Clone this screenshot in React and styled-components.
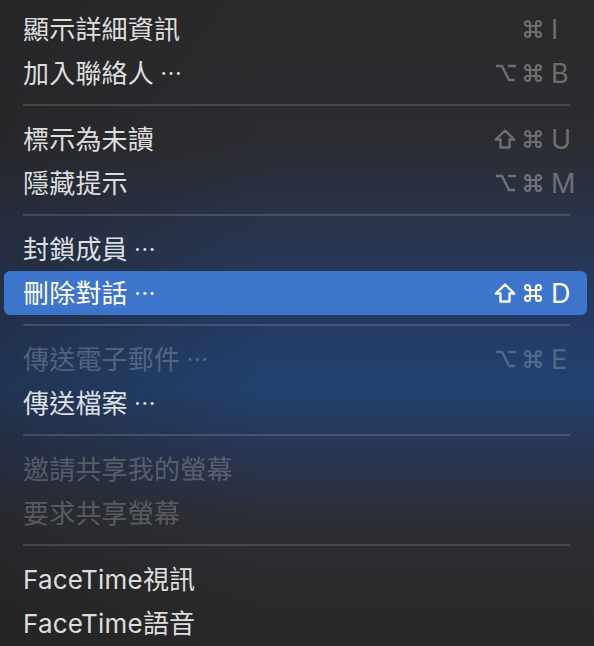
import styled, { createGlobalStyle } from 'styled-components';

const GlobalStyle = createGlobalStyle`
	html, body {
		margin: 0;
		padding: 0;
		background: #2a2a2a;
	}
	body {
		font-family: Inter, "Noto Sans CJK TC", "Noto Sans", sans-serif;
		-webkit-font-smoothing: antialiased;
	}
`;

const MENU = [
	[
		{ label: '顯示詳細資訊', mods: ['cmd'], keyName: 'I' },
		{ label: '加入聯絡人', more: true, mods: ['opt', 'cmd'], keyName: 'B' },
	],
	[
		{ label: '標示為未讀', mods: ['shift', 'cmd'], keyName: 'U' },
		{ label: '隱藏提示', mods: ['opt', 'cmd'], keyName: 'M' },
	],
	[
		{ label: '封鎖成員', more: true },
		{ label: '刪除對話', more: true, mods: ['shift', 'cmd'], keyName: 'D', active: true },
	],
	[
		{ label: '傳送電子郵件', more: true, mods: ['opt', 'cmd'], keyName: 'E', disabled: true },
		{ label: '傳送檔案', more: true },
	],
	[
		{ label: '邀請共享我的螢幕', disabled: true },
		{ label: '要求共享螢幕', disabled: true },
	],
	[{ label: 'FaceTime視訊' }, { label: 'FaceTime語音' }],
];

const Page = styled.div`
	width: 594px;
	height: 646px;
	overflow: hidden;
	background:
		linear-gradient(90deg, rgba(30, 30, 30, 0.35) 0%, rgba(30, 30, 30, 0) 45%),
		linear-gradient(
			180deg,
			#2a2a2b 0%,
			#2b2c30 22%,
			#29334a 34%,
			#243b64 50%,
			#22416f 60%,
			#283553 70%,
			#2c2f36 80%,
			#2a2a2a 92%,
			#282828 100%
		);
`;

const Menu = styled.div`
	display: flex;
	flex-direction: column;
	padding: 7px 7px 0 4px;
`;

const Row = styled.div`
	display: flex;
	align-items: center;
	height: 44px;
	padding: 0 14px 0 19px;
	border-radius: 6px;
	font-size: 26px;
	letter-spacing: 0.2px;
	background: ${({ $active }) => ($active ? '#3d74cc' : 'transparent')};
	color: ${({ $active, $disabled }) =>
		$active ? '#ffffff' : $disabled ? 'rgba(255, 255, 255, 0.24)' : 'rgba(255, 255, 255, 0.86)'};
`;

const Label = styled.span`
	flex: 1;
	display: flex;
	align-items: center;
	margin-top: -4px;
	white-space: nowrap;
`;

const Ellipsis = styled.span`
	margin-left: 6px;
	font-family: "Noto Sans CJK TC", sans-serif;
	font-size: 22px;
	letter-spacing: -2px;
`;

const Shortcut = styled.span`
	display: flex;
	align-items: center;
	color: ${({ $active, $disabled }) =>
		$active ? '#ffffff' : $disabled ? 'rgba(255, 255, 255, 0.22)' : 'rgba(255, 255, 255, 0.32)'};
`;

const Mods = styled.span`
	display: flex;
	align-items: center;
	gap: 7px;
`;

const Key = styled.span`
	width: 22px;
	margin-left: 8px;
	font-family: Inter, "Liberation Sans", sans-serif;
	font-size: 27px;
	line-height: 1;
`;

const Separator = styled.div`
	height: 2px;
	margin: 9px 17px 11px 19px;
	background: rgba(255, 255, 255, 0.14);
`;

const CmdIcon = () => (
	<svg width="20" height="20" viewBox="0 0 20 20" fill="none" stroke="currentColor" strokeWidth="2.2">
		<path d="M7 7h6v6H7zM7 7V4.5A2.5 2.5 0 1 0 4.5 7H7M13 7V4.5A2.5 2.5 0 1 1 15.5 7H13M7 13v2.5A2.5 2.5 0 1 1 4.5 13H7M13 13v2.5a2.5 2.5 0 1 0 2.5-2.5H13" />
	</svg>
);

const OptIcon = () => (
	<svg width="21" height="18" viewBox="0 0 21 18" fill="none" stroke="currentColor" strokeWidth="2.4">
		<path d="M1 2h6l7 14h6M13 2h8" />
	</svg>
);

const ShiftIcon = () => (
	<svg width="22" height="20" viewBox="0 0 22 20" fill="none" stroke="currentColor" strokeWidth="2.4" strokeLinejoin="round">
		<path d="M11 1.5 1.8 10.5H6.5v8h9v-8h4.7z" />
	</svg>
);

const ICONS = { cmd: CmdIcon, opt: OptIcon, shift: ShiftIcon };

const MenuItem = ({ label, more, mods, keyName, active, disabled }) => (
	<Row $active={active} $disabled={disabled}>
		<Label>
			{label}
			{more && <Ellipsis>⋯</Ellipsis>}
		</Label>
		{keyName && (
			<Shortcut $active={active} $disabled={disabled}>
				<Mods>
					{mods.map((m) => {
						const Icon = ICONS[m];
						return <Icon key={m} />;
					})}
				</Mods>
				<Key>{keyName}</Key>
			</Shortcut>
		)}
	</Row>
);

export default function App() {
	return (
		<Page lang="zh-Hant">
			<GlobalStyle />
			<Menu>
				{MENU.map((group, i) => (
					<div key={i}>
						{i > 0 && <Separator />}
						{group.map((item) => (
							<MenuItem key={item.label} {...item} />
						))}
					</div>
				))}
			</Menu>
		</Page>
	);
}
